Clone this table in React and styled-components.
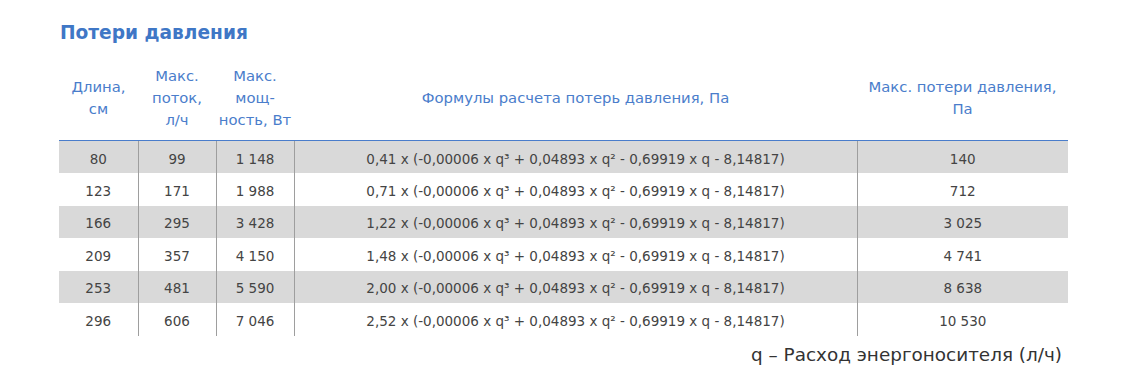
import React from 'react';
import styled, { createGlobalStyle } from 'styled-components';

const rows = [
  ['80', '99', '1 148', '0,41', '140'],
  ['123', '171', '1 988', '0,71', '712'],
  ['166', '295', '3 428', '1,22', '3 025'],
  ['209', '357', '4 150', '1,48', '4 741'],
  ['253', '481', '5 590', '2,00', '8 638'],
  ['296', '606', '7 046', '2,52', '10 530'],
];

const formula = k =>
  `${k} x (-0,00006 x q³ + 0,04893 x q² - 0,69919 x q - 8,14817)`;

const App = () => (
  <Page>
    <GlobalStyle />
    <Title>Потери давления</Title>
    <Table>
      <colgroup>
        <col style={{ width: 79 }} />
        <col style={{ width: 78 }} />
        <col style={{ width: 78 }} />
        <col style={{ width: 563 }} />
        <col style={{ width: 211 }} />
      </colgroup>
      <thead>
        <tr>
          <Th>Длина,<br />см</Th>
          <Th>Макс.<br />поток,<br />л/ч</Th>
          <Th>Макс.<br />мощ-<br />ность, Вт</Th>
          <Th>Формулы расчета потерь давления, Па</Th>
          <Th>Макс. потери давления,<br />Па</Th>
        </tr>
      </thead>
      <tbody>
        {rows.map((r, i) => (
          <Row key={r[0]} $shaded={i % 2 === 0}>
            <Td>{r[0]}</Td>
            <Td>{r[1]}</Td>
            <Td>{r[2]}</Td>
            <Td>{formula(r[3])}</Td>
            <Td>{r[4]}</Td>
          </Row>
        ))}
      </tbody>
    </Table>
    <Note>q – Расход энергоносителя (л/ч)</Note>
  </Page>
);

export default App;

const GlobalStyle = createGlobalStyle`
  html, body {
    margin: 0;
    background: #ffffff;
  }
`;

const Page = styled.div`
  width: 1009px;
  padding: 21px 0 0 59px;
  font-family: "DejaVu Sans", "Liberation Sans", sans-serif;
`;

const Title = styled.h2`
  margin: 0 0 0 1px;
  font-size: 18.6px;
  line-height: 24px;
  font-weight: 700;
  color: #3f77c6;
`;

const Table = styled.table`
  margin-top: 9px;
  width: 1009px;
  border-collapse: collapse;
  table-layout: fixed;
`;

const Th = styled.th`
  padding: 11px 0 9px;
  font-size: 14.8px;
  line-height: 22px;
  font-weight: 400;
  color: #4a7dcb;
  text-align: center;
  vertical-align: middle;
  border-bottom: 1px solid #4a7dcb;
`;

const Row = styled.tr`
  height: 32.5px;
  background: ${p => (p.$shaded ? '#d9d9d9' : '#ffffff')};
`;

const Td = styled.td`
  padding: 3px 0 0;
  font-size: 13.5px;
  color: #444444;
  text-align: center;
  vertical-align: middle;
  border-left: 1px solid #9e9e9e;

  &:first-child {
    border-left: none;
  }
`;

const Note = styled.div`
  margin-top: 7px;
  padding-right: 6px;
  text-align: right;
  font-size: 18.4px;
  line-height: 24px;
  color: #333333;
`;
